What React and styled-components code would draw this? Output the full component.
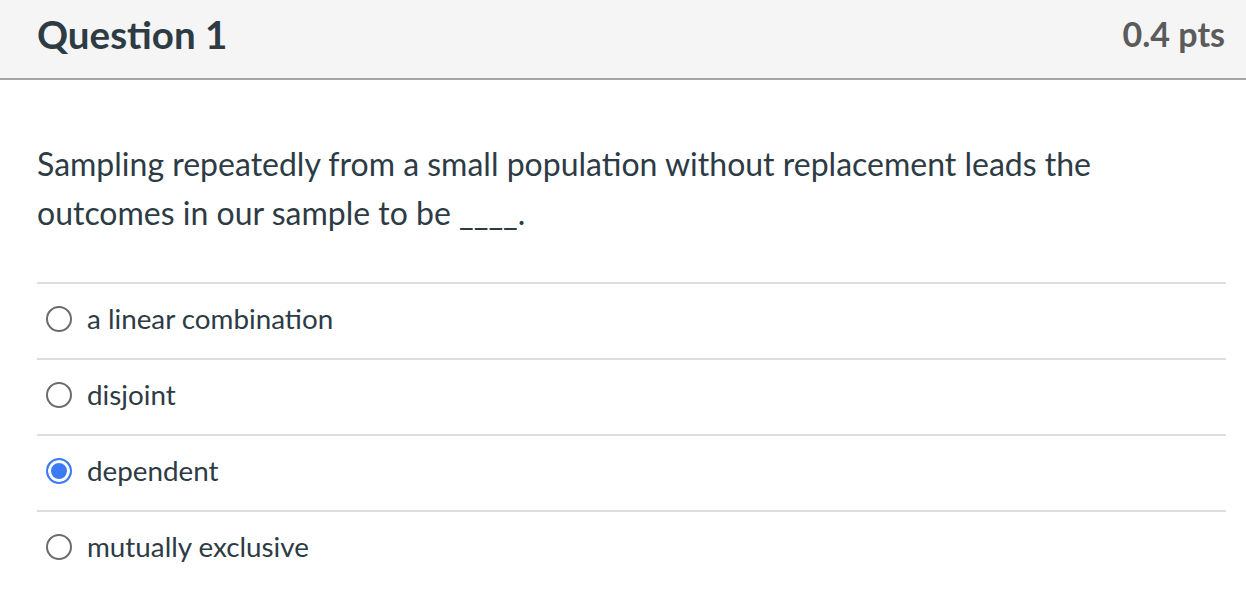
import React, { useState } from 'react';
import styled, { createGlobalStyle } from 'styled-components';

const GlobalStyle = createGlobalStyle`
  html, body {
    margin: 0;
    padding: 0;
    background: #ffffff;
  }
  body {
    font-family: Lato, "Open Sans", "Liberation Sans", sans-serif;
    color: #2d3b45;
  }
`;

const answers = [
  'a linear combination',
  'disjoint',
  'dependent',
  'mutually exclusive',
];

const App = () => {
  const [picked, setPicked] = useState(2);

  return (
    <>
      <GlobalStyle />
      <QuestionCard>
        <Header>
          <Title>Question 1</Title>
          <Points>0.4 pts</Points>
        </Header>
        <Body>
          <Prompt>
            Sampling repeatedly from a small population without replacement leads the
            outcomes in our sample to be ____.
          </Prompt>
          <AnswerList>
            {answers.map((text, i) => (
              <AnswerRow key={text} onClick={() => setPicked(i)}>
                <Radio $checked={picked === i} />
                <AnswerLabel>{text}</AnswerLabel>
              </AnswerRow>
            ))}
          </AnswerList>
        </Body>
      </QuestionCard>
    </>
  );
};

const QuestionCard = styled.div`
  width: 1246px;
  min-height: 604px;
  background: #fff;
`;

const Header = styled.div`
  height: 80px;
  box-sizing: border-box;
  background: #f5f5f5;
  border-bottom: 2px solid #a5a5a5;
  display: flex;
  align-items: center;
  justify-content: space-between;
  padding: 0 21px 11px 37px;
`;

const Title = styled.h2`
  margin: 0;
  font-size: 38.5px;
  font-weight: 700;
  color: #2d3b45;
`;

const Points = styled.div`
  font-size: 34px;
  font-weight: 700;
  color: #5b5b5b;
`;

const Body = styled.div`
  padding: 59px 20px 0 37px;
`;

const Prompt = styled.p`
  margin: 0 0 45px;
  max-width: 1100px;
  font-size: 32px;
  line-height: 49px;
  color: #2d3b45;
`;

const AnswerList = styled.div`
  display: flex;
  flex-direction: column;
`;

const AnswerRow = styled.label`
  height: 76px;
  box-sizing: border-box;
  border-top: 2px solid #dddddd;
  display: flex;
  align-items: center;
  gap: 15px;
  padding: 0 0 5px 9px;
  cursor: pointer;
`;

const Radio = styled.span`
  width: 26px;
  height: 26px;
  box-sizing: border-box;
  border-radius: 50%;
  flex-shrink: 0;
  border: 2px solid ${(p) => (p.$checked ? '#3b7cf6' : '#6c6c6c')};
  background: ${(p) => (p.$checked ? '#3b7cf6' : '#fff')};
  box-shadow: ${(p) => (p.$checked ? 'inset 0 0 0 3px #fff' : 'none')};
`;

const AnswerLabel = styled.span`
  font-size: 27.8px;
  color: #2d3b45;
`;

export default App;
